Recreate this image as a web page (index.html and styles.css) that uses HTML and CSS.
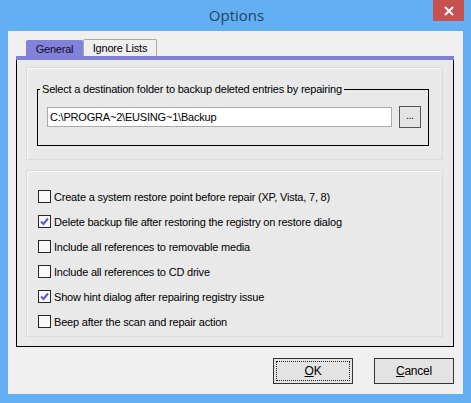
FILE: index.html
```html
<!DOCTYPE html>
<html lang="en">
<head>
  <meta charset="UTF-8">
  <title>Options</title>
  <link rel="stylesheet" href="styles.css">
</head>
<body>
  <div class="window">
    <!-- Title bar -->
    <div class="titlebar">
      <span></span>
      <div class="title">Options</div>
      <div class="close">
        <svg width="10" height="10" viewBox="0 0 10 10"><path d="M1 1 L9 9 M9 1 L1 9" stroke="#fff" stroke-width="2"/></svg>
      </div>
    </div>

    <div class="client">
      <!-- Tabs -->
      <div class="tabs">
        <div class="tab active">General</div>
        <div class="tab">Ignore Lists</div>
      </div>
      <div class="tab-band"></div>

      <div class="tab-panel">
        <div class="section">
          <fieldset class="group">
            <legend>Select a destination folder to backup deleted entries by repairing</legend>
            <div class="folder-row">
              <input class="folder" type="text" value="C:\PROGRA~2\EUSING~1\Backup">
              <div class="browse">...</div>
            </div>
          </fieldset>
        </div>

        <div class="section options">
          <div class="check-row"><span class="box"></span>Create a system restore point before repair (XP, Vista, 7, 8)</div>
          <div class="check-row"><span class="box checked"><svg width="11" height="11" viewBox="0 0 11 11"><path d="M2 5.5 L4.5 8 L9 2.5" fill="none" stroke="#5a5ad0" stroke-width="2"/></svg></span>Delete backup file after restoring the registry on restore dialog</div>
          <div class="check-row"><span class="box"></span>Include all references to removable media</div>
          <div class="check-row"><span class="box"></span>Include all references to CD drive</div>
          <div class="check-row"><span class="box checked"><svg width="11" height="11" viewBox="0 0 11 11"><path d="M2 5.5 L4.5 8 L9 2.5" fill="none" stroke="#5a5ad0" stroke-width="2"/></svg></span>Show hint dialog after repairing registry issue</div>
          <div class="check-row"><span class="box"></span>Beep after the scan and repair action</div>
        </div>
      </div>

      <!-- Dialog buttons -->
      <div class="buttons">
        <div class="btn focused"><u>O</u>K</div>
        <div class="btn"><u>C</u>ancel</div>
      </div>
    </div>
  </div>
</body>
</html>
```

FILE: styles.css
```css
body {
  margin: 0;
  background: #62b0f3;
  font-family: 'Liberation Sans', Arial, sans-serif;
  font-size: 11px;
  letter-spacing: -0.2px;
  color: #000;
}

.window {
  width: 471px;
  height: 403px;
}

.titlebar {
  height: 31px;
  display: grid;
  grid-template-columns: 1fr auto 1fr;
  align-items: start;
}

.title {
  font-family: 'Open Sans', sans-serif;
  font-size: 15px;
  letter-spacing: 0;
  color: #24435f;
  line-height: 31px;
  margin-left: 2px;
}

.close {
  justify-self: end;
  margin-right: 7px;
  width: 31px;
  height: 21px;
  background: #c75050;
  display: flex;
  align-items: center;
  justify-content: center;
}

.client {
  margin: 0 8px;
  height: 363px;
  background: #f0f0f0;
  padding: 8px 9px 0 8px;
  box-sizing: border-box;
}

.tabs {
  display: flex;
  align-items: flex-end;
  margin-left: 10px;
  height: 17px;
}

.tab {
  height: 17px;
  width: 74px;
  box-sizing: border-box;
  border: 1px solid #a9a9a9;
  border-bottom: none;
  border-radius: 2px 2px 0 0;
  background: #efefef;
  text-align: center;
  line-height: 16px;
}

.tab.active {
  width: 57px;
  height: 16px;
  background: #8282da;
  border-color: #8282da;
  color: #0d0d2a;
}

.tab-band {
  height: 4px;
  background: #8080d8;
}

.tab-panel {
  height: 287px;
  box-sizing: border-box;
  border: 1px solid #000;
  border-top: none;
  background: #e9e9e9;
  padding: 7px 10px 9px 9px;
  display: flex;
  flex-direction: column;
  gap: 10px;
}

.section {
  border: 1px solid #dcdcdc;
  box-shadow: inset 1px 1px 0 #f6f6f6;
  height: 93px;
  box-sizing: border-box;
  padding-top: 14px;
}

.group {
  margin: 0 13px 0 10px;
  border: 1px solid #000;
  padding: 10px 7px 17px 9px;
}

.group legend {
  margin-left: -7px;
  padding: 0 2px;
  line-height: 14px;
}

.folder-row {
  display: flex;
  align-items: center;
  gap: 7px;
}

.folder {
  flex: 1;
  height: 20px;
  box-sizing: border-box;
  border: 1px solid #ababab;
  padding: 0 2px;
  font: inherit;
  letter-spacing: -0.2px;
  background: #fff;
  outline: none;
}

.browse {
  width: 22px;
  height: 22px;
  box-sizing: border-box;
  border: 1px solid #555;
  background: #e4e4e4;
  text-align: center;
  line-height: 18px;
  font-size: 10px;
}

.options {
  height: 167px;
  padding: 13px 0 0 11px;
}

.check-row {
  height: 25px;
  display: flex;
  align-items: center;
  gap: 3px;
}

.box {
  width: 13px;
  height: 13px;
  box-sizing: border-box;
  border: 1px solid #262626;
  background: #f8f8f8;
  display: flex;
  align-items: center;
  justify-content: center;
}

.buttons {
  display: flex;
  justify-content: flex-end;
  gap: 21px;
  margin-top: 11px;
}

.btn {
  width: 80px;
  height: 26px;
  box-sizing: border-box;
  border: 1px solid #333;
  background: #e3e3e3;
  text-align: center;
  line-height: 24px;
  font-size: 12px;
}

.btn.focused {
  outline: 1px dotted #222;
  outline-offset: -4px;
}
```
